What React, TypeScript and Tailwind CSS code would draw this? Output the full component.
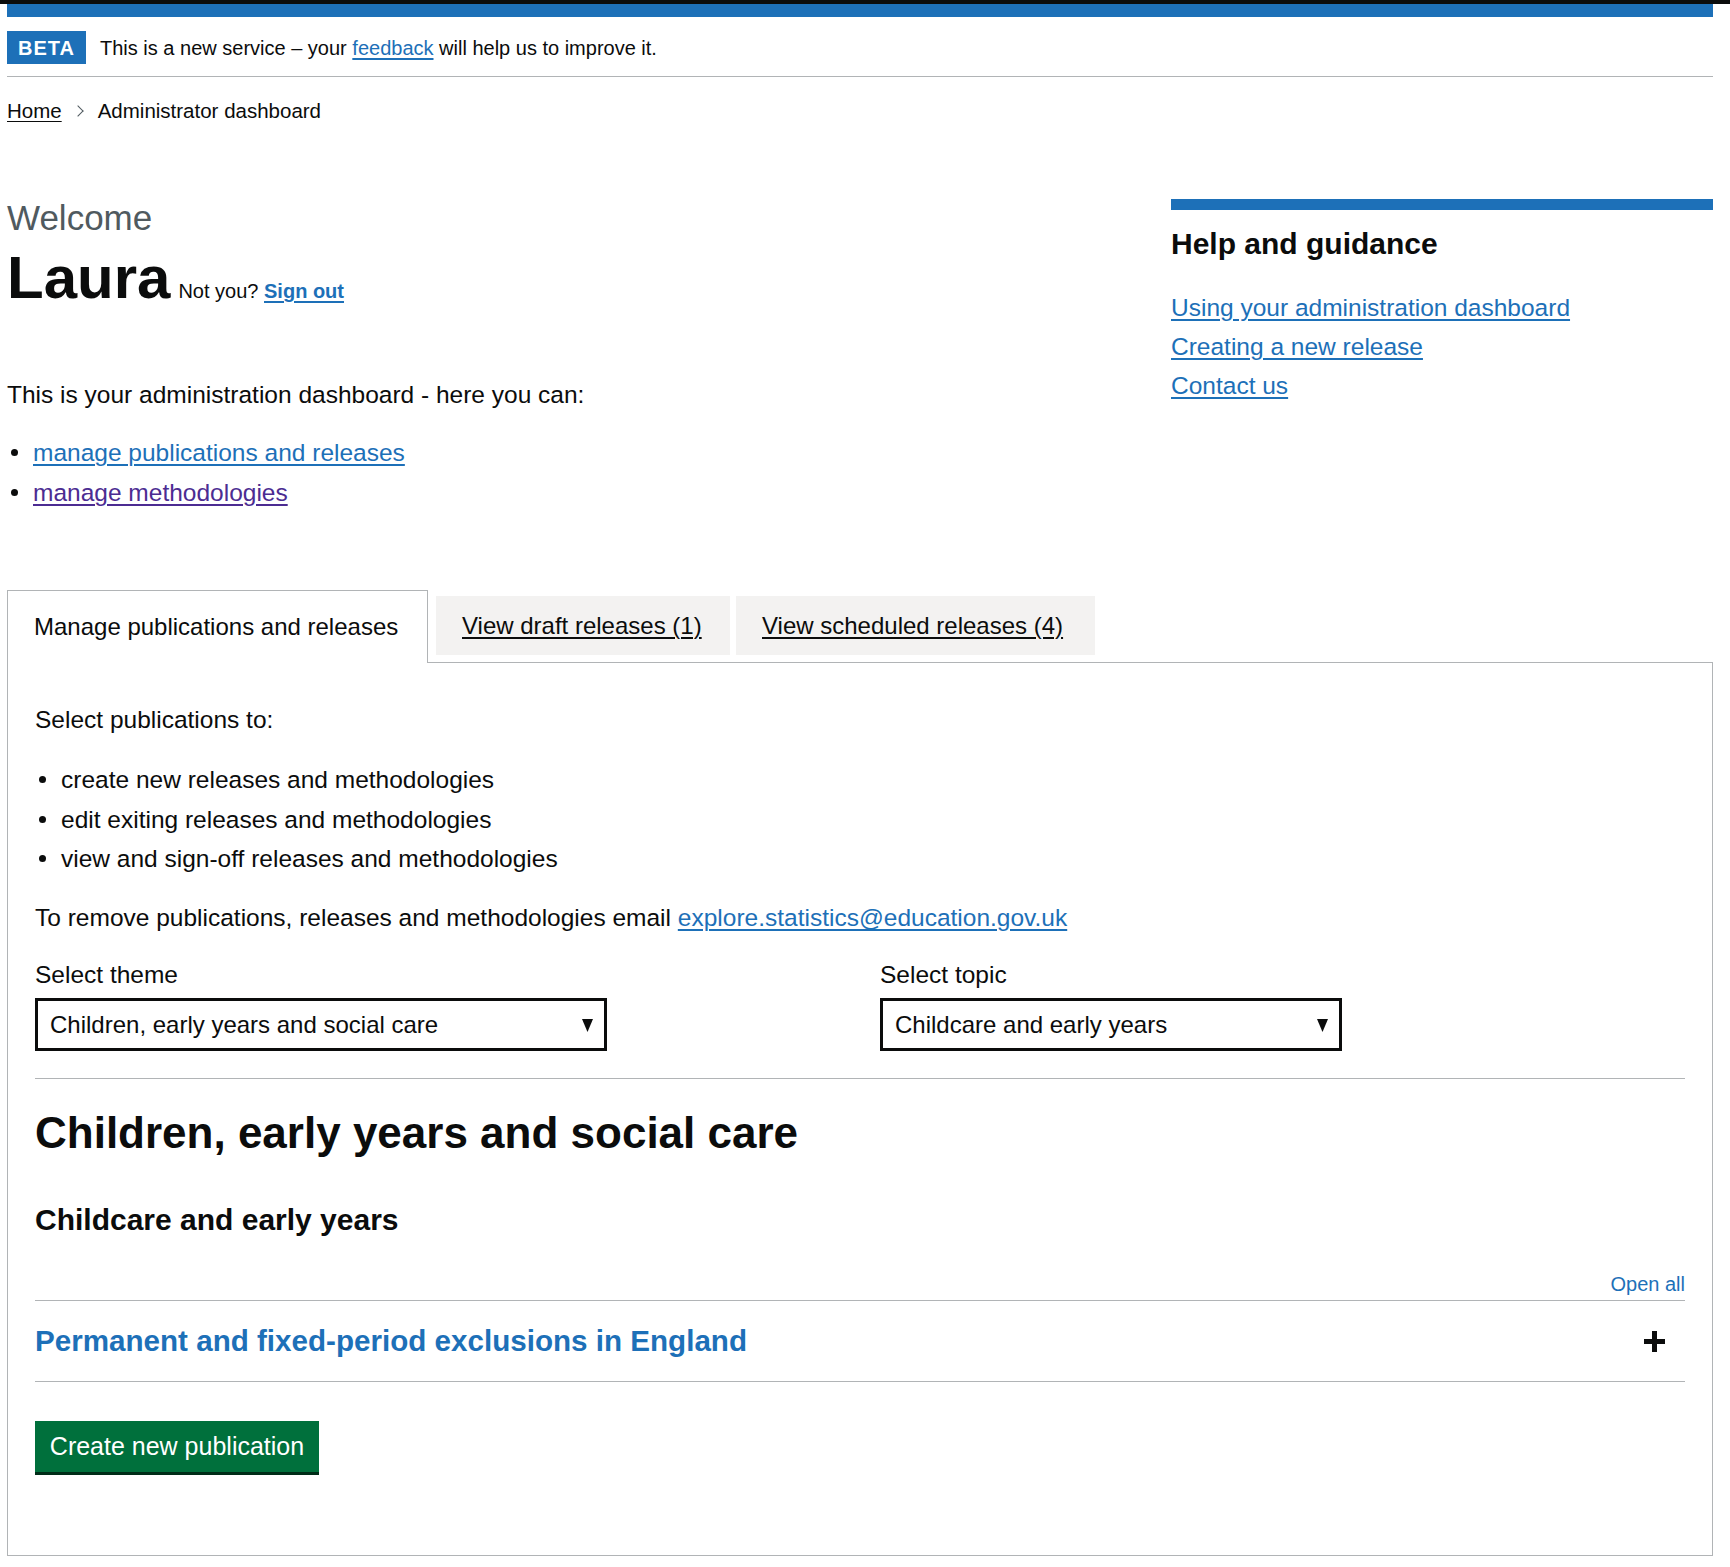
import React from "react";

const linkBlue = "text-[#1d70b8] underline decoration-[2px] underline-offset-[3px]";

function Dot() {
  return (
    <span className="w-[26px] shrink-0 flex items-center">
      <span className="ml-[4px] w-[7px] h-[7px] rounded-full bg-[#0b0c0c]" />
    </span>
  );
}

function FakeSelect({ value, width }: { value: string; width: string }) {
  return (
    <div
      className={`${width} h-[53px] border-[3px] border-[#0b0c0c] pl-[12px] pr-[11px] flex items-center justify-between bg-white`}
    >
      <span className="text-[24px] leading-[33px] whitespace-nowrap">{value}</span>
      <svg width="11" height="14" viewBox="0 0 11 14" className="shrink-0">
        <polygon points="0,1 11,1 5.5,14" fill="#0b0c0c" />
      </svg>
    </div>
  );
}

export default function App() {
  return (
    <div className="bg-white text-[#0b0c0c] font-['Liberation_Sans',Arial,sans-serif] min-h-[1567px]">
      <div className="h-[4px] bg-[#0b0c0c] w-full" />
      <div className="ml-[7px] w-[1706px]">
        {/* blue bar */}
        <div className="h-[13px] bg-[#1d70b8]" />

        {/* phase banner */}
        <div className="pt-[14px] pb-[12px] border-b border-[#b1b4b6] flex items-center">
          <span className="h-[33px] w-[79px] bg-[#1d70b8] text-white font-bold text-[20px] tracking-[1px] flex items-center justify-center">
            BETA
          </span>
          <span className="ml-[14px] text-[20px] leading-[25px] mt-[1px]">
            This is a new service – your{" "}
            <a className={linkBlue} href="#">
              feedback
            </a>{" "}
            will help us to improve it.
          </span>
        </div>

        {/* breadcrumb */}
        <div className="pt-[21px] flex items-center text-[20.5px] leading-[25px]">
          <a className="underline decoration-[1px] underline-offset-[3px] text-[#0b0c0c]" href="#">
            Home
          </a>
          <span className="ml-[12px] w-[8px] h-[8px] border-t border-r border-[#505a5f] rotate-45" />
          <span className="ml-[16px]">Administrator dashboard</span>
        </div>

        {/* main grid */}
        <div className="grid grid-cols-[1124px_542px] gap-x-[40px] mt-[75px]">
          <div>
            <div className="text-[35px] leading-[40px] text-[#505a5f]">Welcome</div>
            <div className="flex items-baseline mt-[10px] h-[60px]">
              <span className="text-[60px] leading-[60px] font-bold">Laura</span>
              <span className="ml-[8px] text-[20px]">
                Not you?{" "}
                <a className={`${linkBlue} font-bold`} href="#">
                  Sign out
                </a>
              </span>
            </div>
            <p className="mt-[70px] text-[24.5px] leading-[33px]">
              This is your administration dashboard - here you can:
            </p>
            <ul className="mt-[25px] flex flex-col gap-[7px] text-[24.5px] leading-[33px]">
              <li className="flex">
                <Dot />
                <a className={linkBlue} href="#">
                  manage publications and releases
                </a>
              </li>
              <li className="flex">
                <Dot />
                <a className="text-[#4c2c92] underline decoration-[2px] underline-offset-[3px]" href="#">
                  manage methodologies
                </a>
              </li>
            </ul>
          </div>
          <div className="pt-[1px]">
            <div className="h-[11px] bg-[#1d70b8]" />
            <h2 className="mt-[16px] text-[30px] leading-[36px] font-bold">Help and guidance</h2>
            <div className="mt-[29px] flex flex-col gap-[6px] text-[24.5px] leading-[33px] items-start">
              <a className={linkBlue} href="#">
                Using your administration dashboard
              </a>
              <a className={linkBlue} href="#">
                Creating a new release
              </a>
              <a className={linkBlue} href="#">
                Contact us
              </a>
            </div>
          </div>
        </div>

        {/* tabs */}
        <div className="mt-[81px] flex items-start">
          <div className="relative z-10 -mb-px h-[73px] w-[421px] border-l border-t border-r border-[#b1b4b6] bg-white pl-[26px] flex items-center text-[24px] whitespace-nowrap">
            Manage publications and releases
          </div>
          <div className="ml-[8px] mt-[6px] h-[59px] w-[294px] bg-[#f3f2f1] pl-[26px] flex items-center text-[24px] whitespace-nowrap">
            <a className="underline decoration-[2px] underline-offset-[3px]" href="#">
              View draft releases (1)
            </a>
          </div>
          <div className="ml-[6px] mt-[6px] h-[59px] w-[359px] bg-[#f3f2f1] pl-[26px] flex items-center text-[24px] whitespace-nowrap">
            <a className="underline decoration-[2px] underline-offset-[3px]" href="#">
              View scheduled releases (4)
            </a>
          </div>
        </div>

        {/* panel */}
        <div className="border border-[#b1b4b6] px-[27px] pt-[40px] pb-[83px]">
          <p className="text-[24.5px] leading-[33px]">Select publications to:</p>
          <ul className="mt-[27px] flex flex-col gap-[6.5px] text-[24.5px] leading-[33px]">
            <li className="flex">
              <Dot />
              <span>create new releases and methodologies</span>
            </li>
            <li className="flex">
              <Dot />
              <span>edit exiting releases and methodologies</span>
            </li>
            <li className="flex">
              <Dot />
              <span>view and sign-off releases and methodologies</span>
            </li>
          </ul>
          <p className="mt-[26px] text-[24.5px] leading-[33px]">
            To remove publications, releases and methodologies email{" "}
            <a className={linkBlue} href="#">
              explore.statistics@education.gov.uk
            </a>
          </p>

          <div className="mt-[24px] grid grid-cols-2 gap-x-[40px]">
            <div>
              <label className="block text-[24.5px] leading-[33px]">Select theme</label>
              <div className="mt-[7px]">
                <FakeSelect value="Children, early years and social care" width="w-[572px]" />
              </div>
            </div>
            <div>
              <label className="block text-[24.5px] leading-[33px]">Select topic</label>
              <div className="mt-[7px]">
                <FakeSelect value="Childcare and early years" width="w-[462px]" />
              </div>
            </div>
          </div>

          <div className="mt-[27px] h-px bg-[#b1b4b6]" />

          <h1 className="mt-[29px] text-[44px] leading-[50px] font-bold">
            Children, early years and social care
          </h1>
          <h2 className="mt-[44px] text-[30px] leading-[36px] font-bold">Childcare and early years</h2>

          <div className="mt-[34px] flex justify-end">
            <span className="text-[20px] leading-[25px] text-[#1d70b8]">Open all</span>
          </div>
          <div className="mt-[3px] border-t border-b border-[#b1b4b6] h-[82px] flex items-center justify-between pr-[20px]">
            <span className="text-[29.6px] leading-[36px] font-bold text-[#1d70b8]">
              Permanent and fixed-period exclusions in England
            </span>
            <svg width="21" height="21" viewBox="0 0 21 21">
              <rect x="8" y="0" width="5" height="21" fill="#0b0c0c" />
              <rect x="0" y="8" width="21" height="5" fill="#0b0c0c" />
            </svg>
          </div>

          <button className="mt-[39px] h-[51px] w-[284px] bg-[#00703c] text-white text-[25px] shadow-[0_3px_0_#002d18] flex items-center justify-center">
            Create new publication
          </button>
        </div>
      </div>
    </div>
  );
}
